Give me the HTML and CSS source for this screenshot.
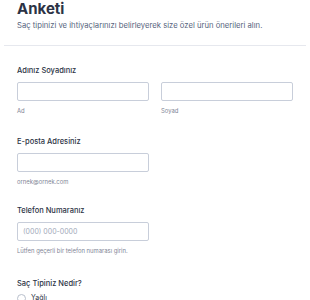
FILE: index.html
```html
<!DOCTYPE html>
<html lang="tr">
<head>
<meta charset="utf-8">
<link rel="stylesheet" href="styles.css">
</head>
<body>
<div class="page">
  <header class="header">
    <h1 class="title">Anketi</h1>
    <p class="subtitle">Saç tipinizi ve ihtiyaçlarınızı belirleyerek size özel ürün önerileri alın.</p>
  </header>
  <form class="form">
    <div class="field field-name">
      <label class="label">Adınız Soyadınız</label>
      <div class="row">
        <div class="col">
          <input class="input" type="text">
          <span class="sublabel">Ad</span>
        </div>
        <div class="col">
          <input class="input" type="text">
          <span class="sublabel">Soyad</span>
        </div>
      </div>
    </div>
    <div class="field field-email">
      <label class="label">E-posta Adresiniz</label>
      <div class="col">
        <input class="input" type="email">
        <span class="sublabel">ornek@ornek.com</span>
      </div>
    </div>
    <div class="field field-phone">
      <label class="label">Telefon Numaranız</label>
      <div class="col">
        <input class="input" type="tel" placeholder="(000) 000-0000">
        <span class="sublabel">Lütfen geçerli bir telefon numarası girin.</span>
      </div>
    </div>
    <div class="field field-radio">
      <label class="label label-radio">Saç Tipiniz Nedir?</label>
      <div class="option"><span class="radio"></span><span class="option-text">Yağlı</span></div>
    </div>
  </form>
</div>
</body>
</html>
```
FILE: styles.css
```css
* { box-sizing: border-box; }
html, body { margin: 0; padding: 0; background: #fff; }
body { font-family: Inter, "Noto Sans", sans-serif; color: #2c3345; overflow: hidden; }
.page { padding: 0 4px; }
.header { padding: 0 13px 14px; border-bottom: 1px solid #e6e8ee; }
.title { margin: 0; font-size: 15px; line-height: 18px; font-weight: 700; color: #2c3345; }
.subtitle { margin: 3px 0 0; font-size: 7.7px; line-height: 10px; color: #57647e; }
.form { padding: 20px 13px 0; }
.field { display: flex; flex-direction: column; }
.field-name { height: 71px; }
.field-email { height: 69px; }
.field-phone { height: 73px; }
.label { font-size: 7.5px; line-height: 10px; font-weight: 500; color: #2c3345; margin-bottom: 6px; }
.label-radio { margin-bottom: 4px; }
.row { display: flex; gap: 12px; width: 275px; }
.col { display: flex; flex-direction: column; width: 132px; }
.input { width: 132px; height: 19px; border: 1px solid #c8ceda; border-radius: 2px; padding: 0 5px; font-family: Inter, sans-serif; font-size: 7px; color: #2c3345; background: #fff; outline: none; }
.input::placeholder { color: #a2a9b9; }
.sublabel { margin-top: 6px; font-size: 5.9px; line-height: 8px; color: #7f8596; }
.option { display: flex; align-items: center; gap: 5px; }
.radio { flex: none; width: 9px; height: 9px; border: 1px solid #b8bfcc; border-radius: 50%; }
.option-text { font-size: 7px; line-height: 10px; color: #2c3345; }
```
